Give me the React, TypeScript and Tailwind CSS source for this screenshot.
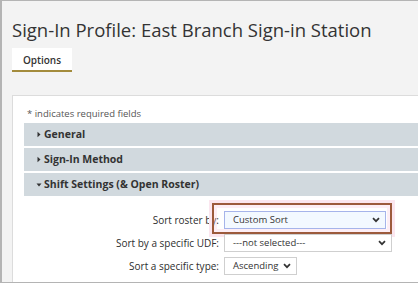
import React from "react";

const font = { fontFamily: '"Open Sans", "Noto Sans", sans-serif' };

function Chevron() {
  return (
    <svg width="8" height="6" viewBox="0 0 8 6" className="shrink-0">
      <path d="M1 1.2 L4 4.2 L7 1.2" fill="none" stroke="#333" strokeWidth="1.7" />
    </svg>
  );
}

function Tri({ down }: { down?: boolean }) {
  return down ? (
    <svg width="6" height="6" viewBox="0 0 6 6" className="shrink-0">
      <path d="M0.5 1.5 L5.5 1.5 L3 4.5 Z" fill="#333" />
    </svg>
  ) : (
    <svg width="6" height="7" viewBox="0 0 6 7" className="shrink-0">
      <path d="M1.5 0.8 L4.5 3.5 L1.5 6.2 Z" fill="#333" />
    </svg>
  );
}

function SectionRow({ label, open }: { label: string; open?: boolean }) {
  return (
    <div className="h-[23px] bg-[#d1d9de] flex items-center pl-[12px] gap-[2px]">
      <Tri down={open} />
      <span className="text-[10.5px] font-bold text-[#333] leading-none">{label}</span>
    </div>
  );
}

function FormRow({
  label,
  value,
  width,
  focused,
}: {
  label: string;
  value: string;
  width: string;
  focused?: boolean;
}) {
  return (
    <div className="flex items-center h-[18px]">
      <div className="w-[196px] text-right pr-[1px] text-[10px] text-[#2e2e2e] leading-none">{label}</div>
      <div className={`relative ml-[4px] ${width}`}>
        <div
          className={`relative h-[18px] flex items-center justify-between pl-[8px] pr-[5px] border ${
            focused ? "border-[#a6b4ea] bg-[#f3f9ff]" : "border-[#cfcfcf] bg-white"
          }`}
        >
          <span className="text-[9.5px] text-[#333] leading-none">{value}</span>
          <Chevron />
        </div>
        {focused && (
          <span className="absolute left-[-12px] right-[-6px] top-[-8px] bottom-[-5px] border-2 border-[#9c5a3c] shadow-[0_0_0_3px_#fbe6ef,inset_0_0_0_3px_rgba(248,200,222,0.3)]" />
        )}
      </div>
    </div>
  );
}

export default function App() {
  return (
    <div
      style={font}
      className="w-[418px] h-[283px] overflow-hidden bg-[#f3f3f3] border-t border-b border-l-2 border-[#b4b4b4] flex flex-col pl-[10px]"
    >
      <h1 className="pt-[15px] text-[18.5px] leading-[28px] text-[#333] font-normal whitespace-nowrap">
        Sign-In Profile: East Branch Sign-in Station
      </h1>
      <div className="mt-[4px] flex">
        <div className="w-[60px] h-[24px] bg-white border-b-2 border-[#a38b3c] flex items-center justify-center pt-[2px]">
          <span className="text-[10px] font-semibold text-[#333] leading-none">Options</span>
        </div>
      </div>
      <div className="mt-[23px] flex-1 bg-white border-t border-l border-[#dcdcdc] pl-[11px]">
        <div className="pt-[11px] pl-[3px] text-[9.5px] leading-[14px] text-[#555] mb-[2px]">
          * indicates required fields
        </div>
        <div className="flex flex-col gap-[2px]">
          <SectionRow label="General" />
          <SectionRow label="Sign-In Method" />
          <SectionRow label="Shift Settings (& Open Roster)" open />
        </div>
        <div className="pt-[15px] flex flex-col gap-[5px]">
          <FormRow label="Sort roster by:" value="Custom Sort" width="w-[162px]" focused />
          <FormRow label="Sort by a specific UDF:" value="---not selected---" width="w-[168px]" />
          <FormRow label="Sort a specific type:" value="Ascending" width="w-[73px]" />
        </div>
      </div>
    </div>
  );
}
